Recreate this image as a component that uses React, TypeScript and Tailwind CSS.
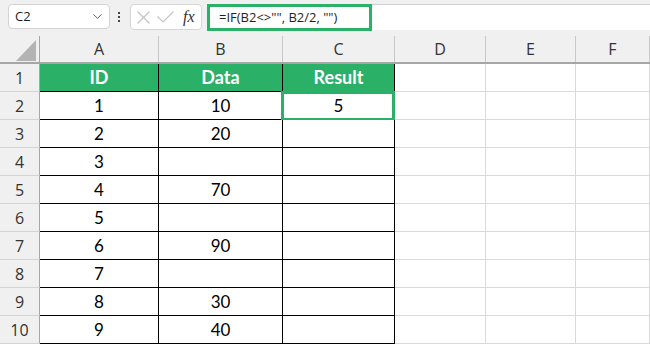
import { ChevronDown } from "lucide-react";

const cols = ["A", "B", "C", "D", "E", "F"];
const colWidths = ["w-[119px]", "w-[124px]", "w-[112px]", "w-[91px]", "w-[90px]", "flex-1"];

const rows: [string, string, string][] = [
  ["ID", "Data", "Result"],
  ["1", "10", "5"],
  ["2", "20", ""],
  ["3", "", ""],
  ["4", "70", ""],
  ["5", "", ""],
  ["6", "90", ""],
  ["7", "", ""],
  ["8", "30", ""],
  ["9", "40", ""],
];

function Cell({
  value,
  col,
  row,
}: {
  value: string;
  col: number;
  row: number;
}) {
  const inTable = col < 3;
  const header = row === 0 && inTable;
  const selected = row === 1 && col === 2;
  return (
    <div
      className={`relative flex h-[28px] shrink-0 items-center justify-center border-b border-r ${colWidths[col]} ${
        inTable ? "border-black" : "border-[#d9d9d9]"
      } ${header ? "bg-[#2bb067] text-[18px] font-bold text-white" : "bg-white text-[17px] text-black"}`}
    >
      {value}
      {selected && (
        <div className="absolute -left-[2px] -top-[1px] h-[30px] w-[114px] border-[3px] border-[#2bb067]" />
      )}
    </div>
  );
}

export default function App() {
  return (
    <div className="h-[344px] w-[650px] overflow-hidden bg-[#f0f0f0] font-['Lato',sans-serif]">
      {/* formula bar */}
      <div className="flex h-[36px] items-start pt-[4px]">
        <div className="ml-[8px] flex h-[25px] w-[102px] items-center justify-between rounded-[4px] border border-[#d3d3d3] bg-white pl-[6px] pr-[4px] font-['Open_Sans',sans-serif] text-[13px] text-[#1f1f1f]">
          <span>C2</span>
          <ChevronDown size={15} strokeWidth={1.5} className="text-[#555]" />
        </div>
        <div className="ml-[8px] mt-[8px] flex flex-col gap-[2px]">
          <span className="block h-[2px] w-[2px] bg-[#444]" />
          <span className="block h-[2px] w-[2px] bg-[#444]" />
          <span className="block h-[2px] w-[2px] bg-[#444]" />
        </div>
        <div className="ml-[10px] flex h-[26px] w-[72px] items-center rounded-[4px] border border-[#d6d6d6] bg-white pl-[6px]">
          <svg width="13" height="13" viewBox="0 0 13 13" stroke="#c4c4c4" strokeWidth="1.2" fill="none">
            <path d="M0.5 0.5 L12.5 12.5 M12.5 0.5 L0.5 12.5" />
          </svg>
          <svg className="ml-[7px]" width="17" height="12" viewBox="0 0 17 12" stroke="#c4c4c4" strokeWidth="1.2" fill="none">
            <path d="M0.5 5.5 L6 11 L16.5 0.5" />
          </svg>
          <span className="ml-[9px] font-['Liberation_Serif',serif] text-[16px] italic text-[#333]">
            fx
          </span>
        </div>
        <div className="ml-[5px] flex h-[26px] flex-1 border-t border-[#d0d0d0] bg-white">
          <div className="-mt-[1px] flex h-[27px] w-[165px] items-center border-[3px] border-[#2bb067] pl-[9px] font-['Open_Sans',sans-serif] text-[13px] text-[#1f1f1f]">
            =IF(B2&lt;&gt;"", B2/2, "")
          </div>
        </div>
      </div>

      {/* column headers */}
      <div className="flex h-[28px] border-b-2 border-[#a6a6a6] font-['Open_Sans',sans-serif] text-[16px] text-[#333]">
        <div className="relative h-full w-[40px] shrink-0 border-r border-[#a6a6a6]">
          <svg className="absolute left-[16px] top-[4px]" width="20" height="21" viewBox="0 0 20 21">
            <polygon points="20,0 20,21 0,21" fill="#b3b3b3" />
          </svg>
        </div>
        {cols.map((c, i) => (
          <div
            key={c}
            className={`flex h-full shrink-0 items-center justify-center border-r border-[#c8c8c8] ${colWidths[i]}`}
          >
            {c}
          </div>
        ))}
      </div>

      {/* rows */}
      {rows.map((r, ri) => (
        <div key={ri} className="flex">
          <div className="flex h-[28px] w-[40px] shrink-0 items-center justify-center border-b border-r border-b-[#d4d4d4] border-r-[#a6a6a6] bg-[#f0f0f0] font-['Open_Sans',sans-serif] text-[16px] text-[#333]">
            {ri + 1}
          </div>
          {[...r, "", "", ""].map((v, ci) => (
            <Cell key={ci} value={v} col={ci} row={ri} />
          ))}
        </div>
      ))}
    </div>
  );
}
